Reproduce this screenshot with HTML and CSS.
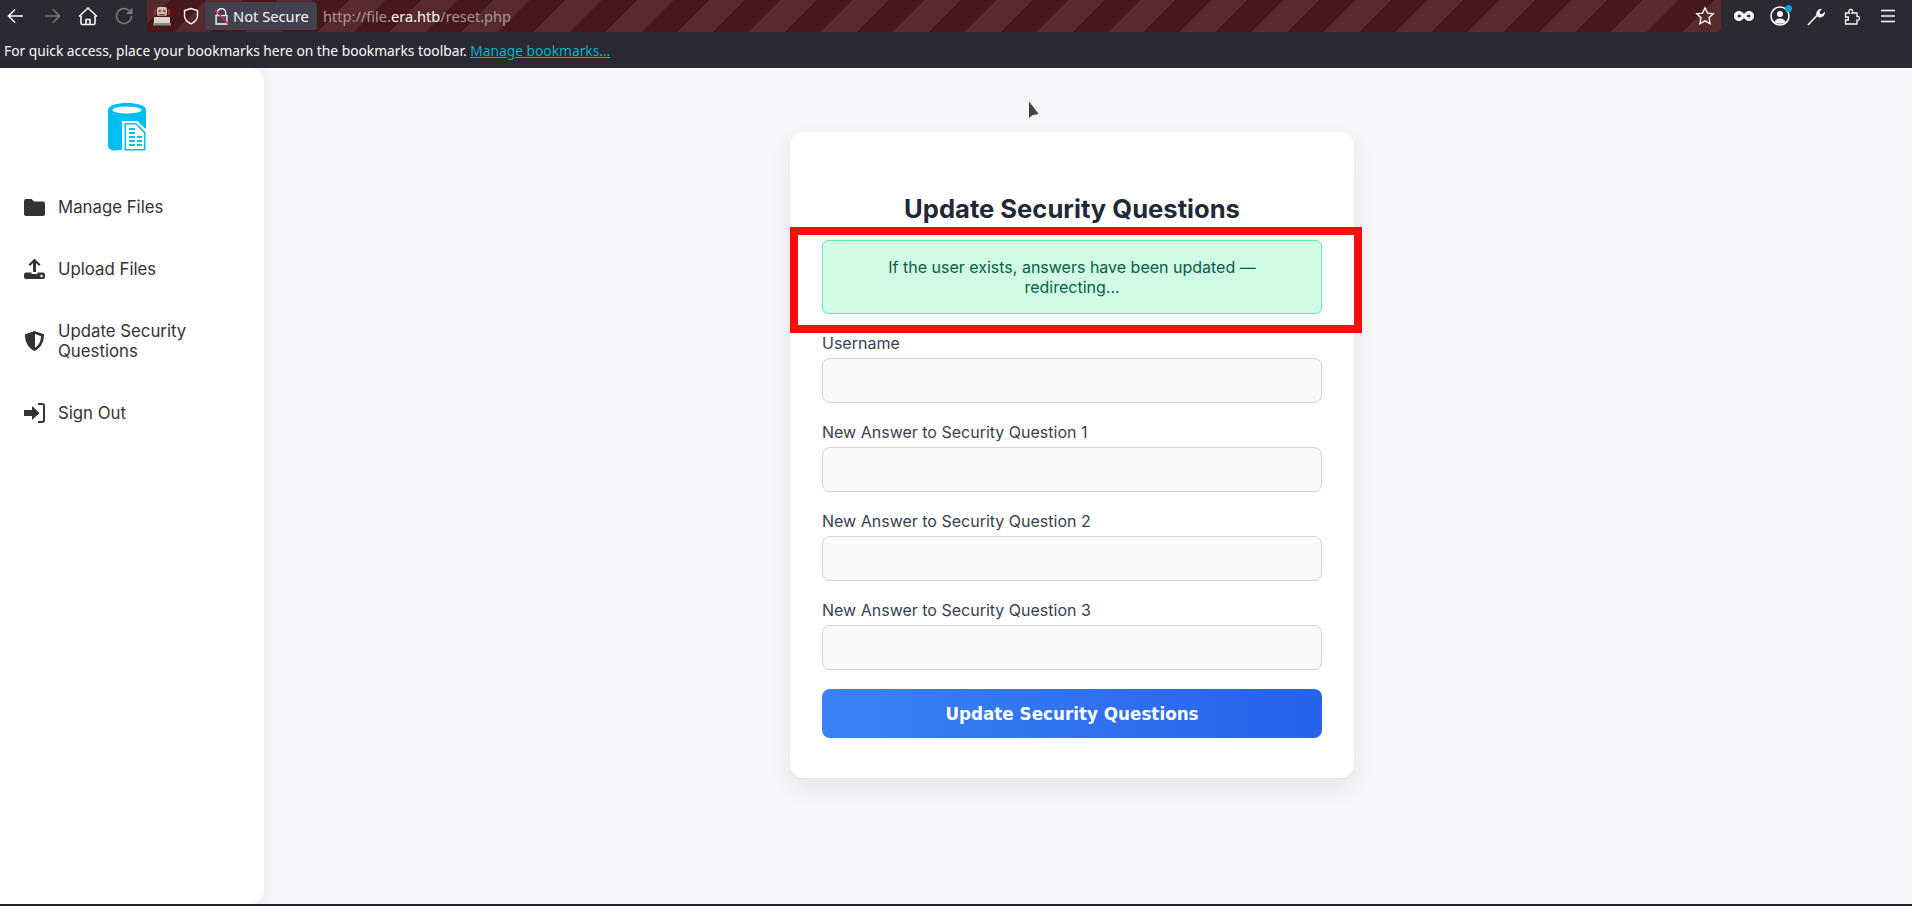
FILE: index.html
```html
<!DOCTYPE html>
<html lang="en-US">
<head>
<meta charset="utf-8">
<title>Update Security Questions</title>
<link rel="stylesheet" href="styles.css">
</head>
<body>

<div class="toolbar">
  <div class="navbuttons">
    <svg class="ticon" viewBox="0 0 24 24"><path d="M19 12H5M11 5.5 4.5 12l6.500 6.500"/></svg>
    <svg class="ticon dim" viewBox="0 0 24 24"><path d="M5 12h14M13 5.500l6.500 6.500-6.500 6.500"/></svg>
    <svg class="ticon" viewBox="0 0 24 24"><path d="M5 11.500V19a1.500 1.500 0 0 0 1.500 1.500h11A1.500 1.500 0 0 0 19 19v-7.500M3 12.500l9-8.500 9 8.500M10 20.500v-5h4v5"/></svg>
    <svg class="ticon dim" viewBox="0 0 24 24"><path d="M19.500 12a7.500 7.500 0 1 1-2.500-5.600"/><path class="solid" d="M20.500 3.500v6.500H14z"/></svg>
  </div>
  <div class="urlbar">
    <svg class="urlicon" viewBox="0 0 20 22">
      <rect x="5" y="2" width="10" height="9" rx="2" fill="#c9c5b8"/>
      <circle cx="7.800" cy="6" r="1.600" fill="#e0492f"/>
      <circle cx="12.200" cy="6" r="1.600" fill="#e0492f"/>
      <rect x="7" y="9" width="6" height="1.500" fill="#5a5048"/>
      <rect x="2" y="12" width="16" height="6" fill="#d9d5c8"/>
      <rect x="1" y="18" width="18" height="2.500" fill="#8d877a"/>
      <path d="M3 4v6M17 4v6" stroke="#a6262c" stroke-width="2"/>
    </svg>
    <svg class="urlicon shield" viewBox="0 0 20 22"><path d="M10 3.500 3.500 5.500V11c0 3.500 2.800 6 6.500 7.800 3.700-1.800 6.500-4.300 6.500-7.800V5.500z"/></svg>
    <div class="notsecure">
      <svg class="lock" viewBox="0 0 18 22">
        <path d="M4 10V6.500a5 5 0 0 1 10 0V10M2.500 10h13v10h-13z"/>
        <path class="slash" d="M1 3l16 17"/>
      </svg>
      <span>Not Secure</span>
    </div>
    <div class="url">http://file.<b>era.htb</b>/reset.php</div>
    <svg class="urlicon star" viewBox="0 0 20 20"><path d="m10 1.800 2.500 5.300 5.700.700-4.200 4 1.100 5.800L10 14.800l-5.100 2.800L6 11.800l-4.200-4 5.700-.700z"/></svg>
  </div>
  <div class="rightbuttons">
    <svg class="ticon" viewBox="0 0 24 24"><path class="solid" d="M7 7C3.800 7 2 9.400 2 12s1.800 5 5 5c2.300 0 3.800-1.500 5-3 1.200 1.500 2.700 3 5 3 3.200 0 5-2.400 5-5s-1.800-5-5-5c-2.300 0-3.800 1.500-5 3-1.200-1.500-2.700-3-5-3zm0 3.500c1 0 1.800.800 2.500 1.500-.700.700-1.500 1.500-2.500 1.500a1.500 1.500 0 0 1 0-3zm10 0a1.500 1.500 0 0 1 0 3c-1 0-1.800-.800-2.500-1.500.700-.700 1.500-1.500 2.500-1.500z"/></svg>
    <div class="account">
      <svg class="ticon" viewBox="0 0 24 24"><circle cx="12" cy="12" r="9"/><circle class="solid" cx="12" cy="10" r="3"/><path class="solid" d="M6.500 18c1-3 3-3.500 5.500-3.500s4.500.5 5.500 3.500c-3 2.300-8 2.300-11 0z"/></svg>
      <span class="dot"></span>
    </div>
    <svg class="ticon" viewBox="0 0 24 24"><path d="M4 21l9-9.500"/><path class="solid" d="M12.500 11.500c-1-3.500 1.500-7 5.500-6.800l-2.500 3 .5 2 2 .5 3-2.500c.2 4-3.300 6.500-6.500 5.500z"/></svg>
    <svg class="ticon thin" viewBox="0 0 24 24"><path d="M5.500 9h3.800c-.7-1-.7-2 0-3 .9-1.100 2.700-.9 3.200.5.200.9 0 1.700-.5 2.500H17v3.500c1.300-.5 2.500.4 2.500 1.800s-1.200 2.300-2.500 1.800V20H5.500v-4h2.800v-3H5.500z"/></svg>
    <svg class="ticon" viewBox="0 0 24 24"><path d="M5 6.500h14M5 12h14M5 17.500h14"/></svg>
  </div>
</div>

<div class="bookmarks">
  For quick access, place your bookmarks here on the bookmarks toolbar. <a href="#">Manage bookmarks…</a>
</div>

<div class="page">
  <div class="sidebar">
    <div class="logo">
      <svg viewBox="0 0 40 50" width="40" height="50">
        <path fill="#00bdf2" d="M0 7C0 2.500 9 0 19 0s19 2.500 19 7v37H20C9 50 0 47.500 0 43z"/>
        <ellipse cx="19" cy="7" rx="14.500" ry="3.600" fill="#fff"/>
        <path fill="#fff" d="M14 18h15l11 10v22H14z"/>
        <path fill="#00bdf2" d="M16.500 20h11.500l9.500 9v18.500h-21z"/>
        <path fill="#fff" d="M18 21.500h9.500l8.500 8.500v16H18z"/>
        <path fill="#00bdf2" d="M21 25h6v2h-6zM21 29h6v2h-6zM21 33h6v2h-6zM29 33h5v2h-5zM21 37h6v2h-6zM29 37h5v2h-5zM21 41h6v2h-6zM29 41h5v2h-5z"/>
      </svg>
    </div>
    <div class="nav">
      <a class="navitem" href="#">
        <svg viewBox="0 0 21 20"><path d="M0 4a2 2 0 0 1 2-2h5.500l2.500 2.500h9a2 2 0 0 1 2 2V17a2 2 0 0 1-2 2H2a2 2 0 0 1-2-2z"/></svg>
        <span>Manage Files</span>
      </a>
      <a class="navitem" href="#">
        <svg viewBox="0 0 21 20"><path d="M10.500-.5 16.500 5.500 15 7l-3-3v9h-3V4L6 7 4.500 5.500z"/><path d="M2 13.500h5.500v1.500h6v-1.500H19a2 2 0 0 1 2 2V18a2 2 0 0 1-2 2H2a2 2 0 0 1-2-2v-2.500a2 2 0 0 1 2-2z"/><circle cx="17.500" cy="17" r="1.200" fill="#fff"/></svg>
        <span>Upload Files</span>
      </a>
      <a class="navitem" href="#">
        <svg viewBox="0 0 21 20"><path fill-rule="evenodd" d="M10.500 0 20 3.200c.3 7-2.800 13.500-9.500 16.800C3.800 16.700.7 10.200 1 3.200zm.5 3v13.800c3.800-2.500 5.900-6.700 6-11.600z"/></svg>
        <span>Update Security Questions</span>
      </a>
      <a class="navitem" href="#">
        <svg viewBox="0 0 21 20"><path d="M8 3 15.500 10 8 17v-4H0V7h8z"/><path d="M14 0h4a3 3 0 0 1 3 3v14a3 3 0 0 1-3 3h-4v-2h4a1 1 0 0 0 1-1V3a1 1 0 0 0-1-1h-4z"/></svg>
        <span>Sign Out</span>
      </a>
    </div>
  </div>

  <div class="content">
    <div class="card">
      <h2>Update Security Questions</h2>
      <div class="alert">If the user exists, answers have been updated — redirecting...</div>
      <form class="form">
        <div class="field">
          <label>Username</label>
          <input type="text">
        </div>
        <div class="field">
          <label>New Answer to Security Question 1</label>
          <input type="text">
        </div>
        <div class="field">
          <label>New Answer to Security Question 2</label>
          <input type="text">
        </div>
        <div class="field">
          <label>New Answer to Security Question 3</label>
          <input type="text">
        </div>
        <button type="button">Update Security Questions</button>
      </form>
    </div>
  </div>
</div>

<!-- things lying over the page -->
<div class="highlight"></div>
<svg class="cursor" viewBox="0 0 14 24" width="14" height="24"><path d="M1.500 1v19l4-3.500 7-1z"/></svg>

</body>
</html>
```

FILE: styles.css
```css
* { box-sizing: border-box; }

html, body {
  margin: 0;
  height: 906px;
  overflow: hidden;
}
body {
  background-color: #f4f6f9;
  font-family: "Inter", "Liberation Sans", sans-serif;
  display: flex;
  flex-direction: column;
  border-bottom: 2px solid #1c2530;
}

/* browser chrome */
.toolbar {
  height: 32px;
  background-color: #2b2a33;
  display: flex;
  align-items: center;
  padding: 0 12px 0 4px;
}
.navbuttons, .rightbuttons {
  display: flex;
  align-items: center;
  gap: 12px;
}
.navbuttons { margin-right: 11px; }
.rightbuttons { margin-left: 11px; }
.ticon {
  width: 24px;
  height: 24px;
  fill: none;
  stroke: #fbfbfe;
  stroke-width: 1.6;
  display: block;
}
.ticon.thin { stroke-width: 1.300; }
.ticon.dim { stroke: #77767c; }
.ticon .solid { fill: #fbfbfe; stroke: none; }
.ticon.dim .solid { fill: #77767c; }
.account { position: relative; }
.dot {
  position: absolute;
  top: 1px;
  right: 0;
  width: 7px;
  height: 7px;
  border-radius: 50%;
  background-color: #0a9fe8;
}
.urlbar {
  flex: 1;
  height: 32px;
  border-radius: 0 0 4px 4px;
  background-color: #47171c;
  background-image: repeating-linear-gradient(135deg, #572a2e 0, #572a2e 16.400px, #47171c 16.400px, #47171c 41.800px, #572a2e 41.800px, #572a2e 50.800px);
  display: flex;
  align-items: center;
  padding: 0 6px 0 5px;
}
.urlicon {
  width: 20px;
  height: 22px;
  flex: none;
}
.shield {
  margin-left: 9px;
  fill: none;
  stroke: #fbfbfe;
  stroke-width: 1.400;
}
.star {
  margin-left: auto;
  height: 20px;
  fill: none;
  stroke: #fbfbfe;
  stroke-width: 1.400;
}
.notsecure {
  margin-left: 4px;
  width: 112px;
  height: 28px;
  background-color: #42414d;
  border-radius: 4px;
  display: flex;
  align-items: center;
  gap: 4px;
  padding-left: 9px;
  color: #fbfbfe;
  font: 14.700px "Noto Sans", sans-serif;
}
.lock {
  width: 15px;
  height: 19px;
  flex: none;
  fill: none;
  stroke: #fbfbfe;
  stroke-width: 1.600;
}
.lock .slash { stroke: #e22850; stroke-width: 1.800; }
.url {
  margin-left: 6px;
  color: #a79799;
  font: 14.600px "Noto Sans", sans-serif;
}
.url b { font-weight: normal; color: #fbfbfe; }

.bookmarks {
  height: 36px;
  background-color: #2b2a33;
  color: #fbfbfe;
  font: 13.790px/38px "Noto Sans", sans-serif;
  padding-left: 4px;
}
.bookmarks a { color: #00b3c7; }

/* page */
.page {
  flex: 1;
  display: flex;
  min-height: 0;
}
.sidebar {
  width: 264px;
  flex: none;
  background-color: white;
  border-radius: 0 14px 14px 0;
  box-shadow: 2px 0 12px rgba(0, 0, 0, 0.05);
  padding-top: 35px;
}
.logo {
  padding-left: 108px;
  height: 50px;
  margin-bottom: 44px;
}
.nav {
  display: flex;
  flex-direction: column;
  gap: 42px;
  padding: 0 24px;
}
.navitem {
  display: flex;
  align-items: center;
  gap: 13px;
  color: #333;
  font-size: 16.800px;
  line-height: 20px;
  text-decoration: none;
}
.navitem svg {
  width: 21px;
  height: 20px;
  flex: none;
  fill: #333;
}

.content {
  flex: 1;
  display: flex;
  justify-content: center;
  align-items: flex-start;
  padding: 64px 32px 0 0;
}
.card {
  width: 564px;
  background-color: white;
  border-radius: 14px;
  box-shadow: 0 10px 25px rgba(0, 0, 0, 0.07);
  padding: 61px 32px 40px;
}
.card h2 {
  margin: 0 0 15px;
  font-size: 25.600px;
  line-height: 32px;
  font-weight: 700;
  color: #1f2937;
  text-align: center;
}
.alert {
  background-color: #d1fae5;
  border: 1px solid #6ee7b7;
  border-radius: 6px;
  color: #065f46;
  font-size: 16px;
  line-height: 20px;
  text-align: center;
  padding: 16px 20px;
  margin-bottom: 19px;
}
.form {
  display: flex;
  flex-direction: column;
  gap: 19px;
}
.field label {
  display: block;
  color: #374151;
  font-size: 16px;
  line-height: 20px;
  margin-bottom: 5px;
}
.field input {
  display: block;
  width: 100%;
  height: 45px;
  background-color: #f9fafb;
  border: 1px solid #d1d5db;
  border-radius: 8px;
}
.form button {
  height: 49px;
  border: none;
  border-radius: 8px;
  background: linear-gradient(90deg, #3b82f6, #2563eb);
  color: white;
  font: bold 16.800px "DejaVu Sans", sans-serif;
}

/* red box drawn over the screenshot */
.highlight {
  position: absolute;
  left: 790px;
  top: 227px;
  width: 572px;
  height: 106px;
  border: 8px solid #f90d0d;
}
.cursor {
  position: absolute;
  left: 1027px;
  top: 99px;
  fill: #444;
  stroke: #eee;
  stroke-width: 1;
}
```
